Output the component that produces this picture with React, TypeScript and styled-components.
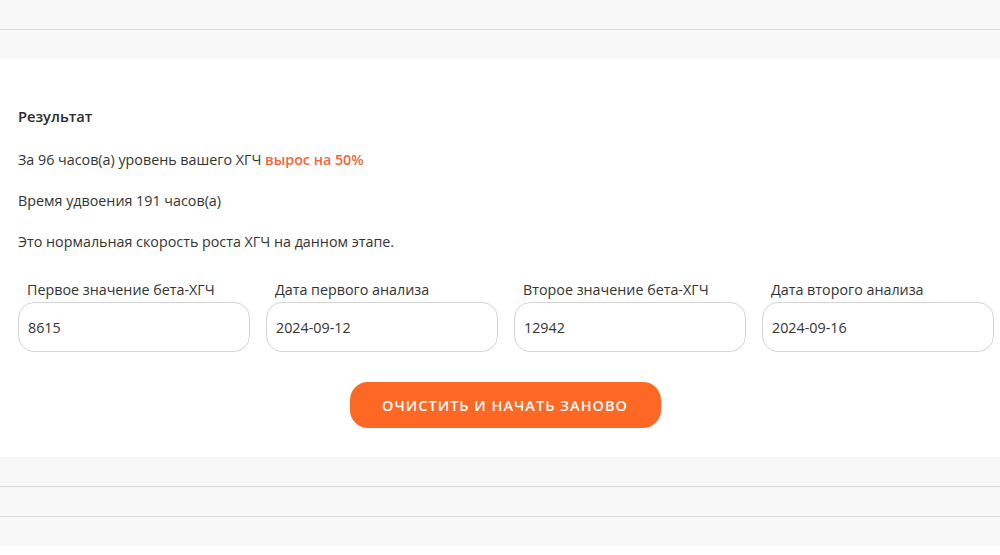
import React from "react";
import styled, { createGlobalStyle } from "styled-components";

const GlobalStyle = createGlobalStyle`
  html, body {
    margin: 0;
    padding: 0;
    background: #f8f8f8;
    font-family: "Open Sans", "Noto Sans", sans-serif;
    color: #333;
  }
  * { box-sizing: border-box; }
`;

const Page = styled.div`
  width: 1000px;
  height: 555px;
  overflow: hidden;
  background: #fff;
`;

const Band = styled.div<{ $line?: boolean }>`
  height: ${({ $line }) => ($line ? "30px" : "29px")};
  background: #f8f8f8;
  border-bottom: ${({ $line }) => ($line ? "1px solid #dcdcdc" : "none")};
`;

const Card = styled.section`
  background: #fff;
  border-radius: 8px;
  padding: 46px 6px 29px 18px;
`;

const Title = styled.h3`
  margin: 0 0 22px;
  font-size: 14.7px;
  font-weight: 600;
  line-height: 22px;
  color: #2b2b2b;
`;

const Text = styled.p`
  margin: 0 0 19px;
  font-size: 14.3px;
  line-height: 22px;
  color: #333;
`;

const Accent = styled.span`
  color: #f2663a;
  font-weight: 600;
`;

const Fields = styled.div`
  display: grid;
  grid-template-columns: repeat(4, 232px);
  gap: 16px;
  margin-top: 27px;
`;

const Field = styled.label`
  display: flex;
  flex-direction: column;
  gap: 2px;
`;

const Label = styled.span`
  padding-left: 9px;
  font-size: 14.3px;
  line-height: 20px;
  color: #333;
`;

const Input = styled.input`
  width: 100%;
  height: 50px;
  padding: 0 9px;
  border: 1px solid #d6d6d6;
  border-radius: 16px;
  background: #fff;
  font-family: inherit;
  font-size: 14.3px;
  color: #333;
  outline: none;
`;

const Actions = styled.div`
  display: flex;
  justify-content: center;
  margin-top: 30px;
  padding-right: 2px;
`;

const ResetButton = styled.button`
  width: 311px;
  height: 46px;
  border: none;
  border-radius: 18px;
  background: #fd6825;
  color: #fff;
  font-family: inherit;
  font-size: 14.5px;
  font-weight: 600;
  letter-spacing: 1px;
  text-transform: uppercase;
  cursor: pointer;
`;

const fields = [
  { label: "Первое значение бета-ХГЧ", value: "8615" },
  { label: "Дата первого анализа", value: "2024-09-12" },
  { label: "Второе значение бета-ХГЧ", value: "12942" },
  { label: "Дата второго анализа", value: "2024-09-16" },
];

export default function App() {
  return (
    <>
      <GlobalStyle />
      <Page>
        <Band $line />
        <Band />
        <Card>
          <Title>Результат</Title>
          <Text>
            За 96 часов(а) уровень вашего ХГЧ <Accent>вырос на 50%</Accent>
          </Text>
          <Text>Время удвоения 191 часов(а)</Text>
          <Text>Это нормальная скорость роста ХГЧ на данном этапе.</Text>
          <Fields>
            {fields.map((f) => (
              <Field key={f.label}>
                <Label>{f.label}</Label>
                <Input defaultValue={f.value} />
              </Field>
            ))}
          </Fields>
          <Actions>
            <ResetButton>Очистить и начать заново</ResetButton>
          </Actions>
        </Card>
        <Band $line />
        <Band $line />
        <Band />
      </Page>
    </>
  );
}
